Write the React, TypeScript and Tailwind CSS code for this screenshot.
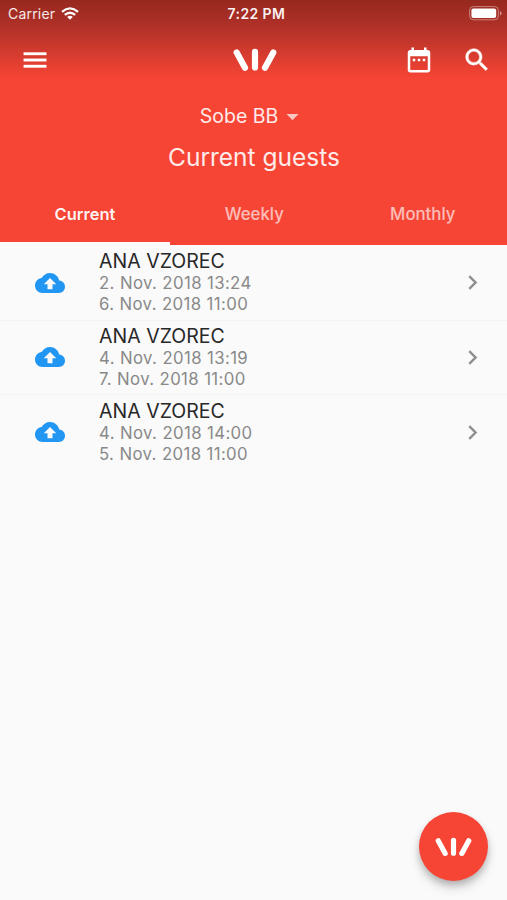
import React from "react";

const guests = [
  { name: "ANA VZOREC", from: "2. Nov. 2018 13:24", to: "6. Nov. 2018 11:00" },
  { name: "ANA VZOREC", from: "4. Nov. 2018 13:19", to: "7. Nov. 2018 11:00" },
  { name: "ANA VZOREC", from: "4. Nov. 2018 14:00", to: "5. Nov. 2018 11:00" },
];

function Icon({ d, className }: { d: string; className: string }) {
  return (
    <svg viewBox="0 0 24 24" fill="currentColor" className={className}>
      <path d={d} />
    </svg>
  );
}

function Logo({ className }: { className: string }) {
  return (
    <svg viewBox="0 0 44 24" fill="none" stroke="white" strokeWidth="6.2" strokeLinecap="round" className={className}>
      <path d="M3.7 4.5 12 19.7M22 3.9V19.5M40.3 4.5 32 19.7" />
    </svg>
  );
}

function StatusBar() {
  return (
    <div className="grid h-[27px] grid-cols-3 items-center pl-2 pr-[5px] text-white">
      <div className="flex items-center gap-[6px]">
        <span className="text-[14px] leading-none tracking-[0.2px] text-white/90">Carrier</span>
        <svg viewBox="0 0 18 13" fill="none" stroke="white" strokeWidth="2.3" className="h-[13px] w-[18px]">
          <path d="M1 4.8Q9-2 17 4.8M3.8 7.9Q9 3.5 14.2 7.9" />
          <path d="M6.2 10Q9 7.6 11.8 10L9 12.8Z" fill="white" stroke="none" />
        </svg>
      </div>
      <span className="justify-self-center pl-[3px] pt-px text-[14px] font-semibold leading-none tracking-[0.4px] whitespace-nowrap text-white/95">7:22 PM</span>
      <svg viewBox="0 0 33 15" className="h-[15px] w-[33px] justify-self-end">
        <rect x="0.6" y="0.6" width="28.8" height="13.2" rx="3.8" fill="none" stroke="white" strokeOpacity="0.4" />
        <rect x="2.4" y="2.4" width="24.8" height="9.6" rx="2" fill="white" />
        <path d="M31 5v4.6q1.6-.8 1.6-2.3T31 5Z" fill="white" fillOpacity="0.5" />
      </svg>
    </div>
  );
}

export default function App() {
  return (
    <div className="relative flex h-[900px] w-[507px] flex-col overflow-hidden bg-[#fafafa] font-['Inter','Liberation_Sans',sans-serif]">
      <header className="flex h-[245px] flex-col bg-[#f64435] bg-[linear-gradient(180deg,#97281f_0px,#b03128_27px,#d03a2e_50px,#f64435_78px)]">
        <StatusBar />
        <div className="grid h-[66px] grid-cols-[1fr_auto_1fr] items-center pl-5 pr-[15px] text-white">
          <Icon className="size-[30px] stroke-white stroke-[0.3]" d="M3 18h18v-2H3v2zm0-5h18v-2H3v2zm0-7v2h18V6H3z" />
          <Logo className="ml-[-2px] h-[24px] w-[44px]" />
          <div className="flex items-center gap-[28px] justify-self-end">
            <Icon
              className="size-[30px]"
              d="M9 11H7v2h2v-2zm4 0h-2v2h2v-2zm4 0h-2v2h2v-2zm2-7h-1V2h-2v2H8V2H6v2H5c-1.11 0-1.99.9-1.99 2L3 20c0 1.1.89 2 2 2h14c1.1 0 2-.9 2-2V6c0-1.1-.9-2-2-2zm0 16H5V9h14v11z"
            />
            <Icon
              className="size-[30px] stroke-white stroke-[0.4]"
              d="M15.5 14h-.79l-.28-.27C15.41 12.59 16 11.11 16 9.5 16 5.91 13.09 3 9.5 3S3 5.91 3 9.5 5.91 16 9.5 16c1.61 0 3.09-.59 4.23-1.57l.27.28v.79l5 4.99L20.49 19l-4.99-5zm-6 0C7.01 14 5 11.99 5 9.5S7.01 5 9.5 5 14 7.01 14 9.5 11.99 14 9.5 14z"
            />
          </div>
        </div>
        <div className="flex h-[46px] items-center justify-center text-white/90">
          <span className="pt-[2px] text-[19.5px] leading-none">Sobe BB</span>
          <Icon className="size-[29px] text-white/70" d="M7 10l5 5 5-5z" />
        </div>
        <h1 className="flex h-[37px] items-center justify-center pl-px text-[24.5px] leading-none text-white/90">Current guests</h1>
        <nav className="grid h-[69px] grid-cols-[170px_1fr_1fr] text-[16.8px] font-medium text-white/65">
          <span className="flex items-center justify-center border-b-[3px] border-[#fafafa] pt-[10px] text-[16.5px] font-semibold text-white/95">Current</span>
          <span className="flex items-center justify-center pt-[9px]">Weekly</span>
          <span className="flex items-center justify-center pt-[9px]">Monthly</span>
        </nav>
      </header>
      <main className="pt-px">
        {guests.map((g, i) => (
          <div key={i} className={`flex h-[74.6px] items-center pl-[35px] pr-[20px] ${i < 2 ? "border-b border-[#f3f3f3]" : ""}`}>
            <Icon
              className="size-[30px] text-[#2196f3]"
              d="M19.35 10.04C18.67 6.59 15.64 4 12 4 9.11 4 6.6 5.64 5.35 8.04 2.34 8.36 0 10.91 0 14c0 3.31 2.69 6 6 6h13c2.76 0 5-2.24 5-5 0-2.64-2.05-4.78-4.65-4.96zM14 13v4h-4v-4H7l5-5 5 5h-3z"
            />
            <div className="ml-[34px] flex-1 text-[16.8px] leading-[21px] tracking-[0.37px] text-[#898989]">
              <div className="mb-px text-[19.5px] leading-[22px] tracking-[0.02px] text-[#282828]">{g.name}</div>
              <div>{g.from}</div>
              <div>{g.to}</div>
            </div>
            <Icon className="size-[29px] text-[#8f8f8f]" d="M10 6 8.59 7.41 13.17 12l-4.58 4.59L10 18l6-6z" />
          </div>
        ))}
      </main>
      <button className="absolute left-[419px] top-[812px] flex size-[69px] items-center justify-center rounded-full bg-[#f64435] shadow-[0_4px_6px_rgba(0,0,0,0.18),0_7px_12px_rgba(0,0,0,0.14)]">
        <Logo className="h-[20px] w-[37px]" />
      </button>
    </div>
  );
}
